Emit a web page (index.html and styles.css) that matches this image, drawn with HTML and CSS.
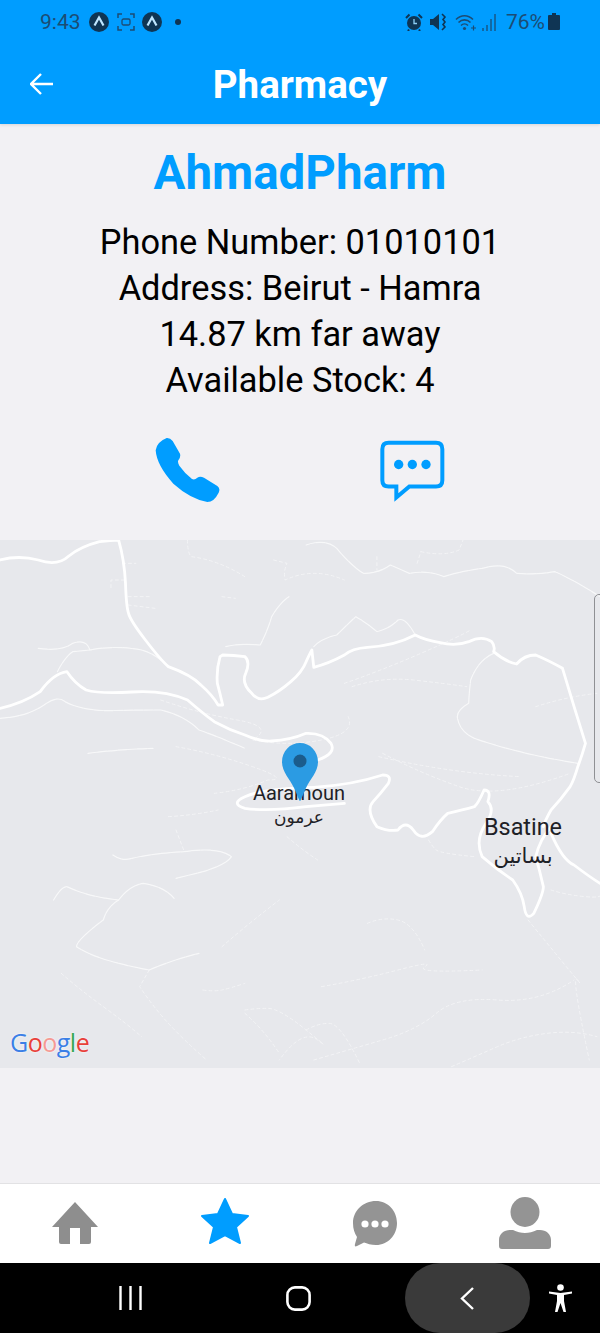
FILE: index.html
```html
<!DOCTYPE html>
<html lang="en">
<head>
<meta charset="utf-8">
<title>Pharmacy</title>
<link rel="stylesheet" href="styles.css">
</head>
<body>
<div class="app">
  <div class="topbar">
    <div class="status">
      <span class="time">9:43</span>
      <svg class="badge" viewBox="0 0 20 20"><circle cx="10" cy="10" r="10" fill="#0f3554"/><path d="M5.500 13.500 10 5.500l4.500 8" fill="none" stroke="#bfe6ff" stroke-width="2.200"/></svg>
      <svg class="focus" viewBox="0 0 18 18"><path d="M1 5V1h4M13 1h4v4M17 13v4h-4M5 17H1v-4" fill="none" stroke="#1c4c74" stroke-width="1.500"/><rect x="5" y="6" width="8" height="6" rx="1.500" fill="none" stroke="#1c4c74" stroke-width="1.300"/></svg>
      <svg class="badge" viewBox="0 0 20 20"><circle cx="10" cy="10" r="10" fill="#0f3554"/><path d="M5.500 13.500 10 5.500l4.500 8" fill="none" stroke="#bfe6ff" stroke-width="2.200"/></svg>
      <span class="dot"></span>
      <span class="grow"></span>
      <svg class="alarm" viewBox="0 0 18 18"><circle cx="9" cy="10" r="7" fill="#0f3554"/><path d="M1 5 4.500 1.500M17 5l-3.500-3.500M4 16.500 3 18M14 16.500l1 1.500" stroke="#0f3554" stroke-width="2" fill="none"/><path d="M9 6v4.500h3" stroke="#8fd0f5" stroke-width="1.300" fill="none"/></svg>
      <svg class="mute" viewBox="0 0 18 18"><path d="M0 6h3l6-5v16l-6-5H0z" fill="#0f3554"/><path d="M12 1l3 3-2 2.500 2 2.500-2 2.500 2 2.500-3 3" fill="none" stroke="#0f3554" stroke-width="1.600"/></svg>
      <svg class="wifi" viewBox="0 0 21 18"><path d="M1 6.500c5-5 12-5 17 0M3.500 9.500c3.500-3.500 8.500-3.500 12 0M6 12.500c2-2 5-2 7 0" fill="none" stroke="#1c4c74" stroke-width="1.600"/><circle cx="9.500" cy="15.500" r="1.600" fill="#1c4c74"/><path d="M16 15h5M18.500 12.500v5" stroke="#1c4c74" stroke-width="1.200"/></svg>
      <svg class="signal" viewBox="0 0 15 18"><path d="M1 18v-3M5 18v-6M9 18V6M13 18V1" stroke="#1c4c74" stroke-width="1.700" opacity=".75"/></svg>
      <span class="pct">76%</span>
      <svg class="battery" viewBox="0 0 12 17"><path d="M4 0h4v2h3a1 1 0 0 1 1 1v13a1 1 0 0 1-1 1H1a1 1 0 0 1-1-1V3a1 1 0 0 1 1-1h3z" fill="#0f3554"/></svg>
    </div>
    <div class="header">
      <svg class="back" viewBox="0 0 23 22"><path d="M11 1 1 11l10 10M1 11h22" fill="none" stroke="#fff" stroke-width="2.400"/></svg>
      <div class="header-title">Pharmacy</div>
      <span></span>
    </div>
  </div>

  <div class="details">
    <h1 class="name">AhmadPharm</h1>
    <div class="info">
      <div>Phone Number: 01010101</div>
      <div>Address: Beirut - Hamra</div>
      <div>14.87 km far away</div>
      <div>Available Stock: 4</div>
    </div>
    <div class="actions">
      <svg class="phone" viewBox="105 50 195 195"><path d="M140 53Q150 52 158 62L180 100Q183 110 175 120Q172 126 178 136Q195 160 216 176Q224 180 232 172Q240 167 252 172L292 197Q302 205 296 217Q282 245 262 245Q210 235 160 190Q110 135 107 90Q110 65 140 53Z" fill="#009dff"/></svg>
      <svg class="bubble" viewBox="780 58 195 188"><path d="M806 66H948Q967 66 967 85V178Q967 197 948 197H868L829 230V197H806Q787 197 787 178V85Q787 66 806 66Z" fill="none" stroke="#009dff" stroke-width="12"/><circle cx="836" cy="131" r="14" fill="#009dff"/><circle cx="877" cy="131" r="14" fill="#009dff"/><circle cx="918" cy="131" r="14" fill="#009dff"/></svg>
    </div>
  </div>

  <div class="map">
    <svg class="roads" viewBox="0 0 1568 1584" preserveAspectRatio="none">
      <g class="r-main">
        <path d="M0 60Q50 45 100 60Q150 80 180 48Q210 20 260 5Q290 0 310 0Q325 60 328 130Q330 200 336 220Q340 240 380 300Q420 360 440 380Q500 405 525 435Q555 465 570 495L582 495Q575 460 568 430Q565 390 575 350L582 345Q610 345 640 350Q655 365 642 400Q630 430 658 460Q675 485 700 472Q730 455 760 425Q790 395 800 365Q810 340 815 330L820 382Q860 370 900 345Q920 325 960 322Q1030 318 1085 285Q1110 300 1150 308Q1190 320 1225 305Q1260 285 1285 305Q1295 320 1290 335Q1320 365 1350 372Q1370 345 1400 345Q1440 365 1470 385Q1500 500 1530 610Q1520 650 1510 680Q1500 720 1490 740Q1465 780 1440 810Q1425 840 1420 860"/>
        <path d="M0 505Q60 490 105 455Q140 400 175 395Q195 430 225 450Q260 462 345 456Q430 450 490 480Q530 520 560 545Q600 570 640 585Q680 605 710 603Q760 600 800 580Q845 578 865 610Q880 640 830 660"/>
        <path d="M820 742Q920 735 1000 705Q1025 705 1015 730Q995 760 975 785Q955 810 985 860Q1015 875 1040 870Q1060 840 1080 870Q1100 905 1130 875Q1150 840 1170 820Q1210 810 1240 800Q1250 790 1265 750Q1285 750 1275 785Q1295 810 1270 850Q1240 900 1260 950Q1300 990 1340 1020Q1365 1060 1370 1100Q1375 1145 1395 1120Q1420 1060 1420 1040Q1410 990 1400 950Q1410 900 1440 860"/>
        <path d="M820 742Q690 745 640 770Q600 790 640 805Q700 815 800 800L900 790"/>
        <path d="M1440 880Q1470 960 1500 975Q1540 1010 1568 1030"/>
      </g>
      <g class="r-mid">
        <path d="M0 535Q70 530 115 495Q150 465 170 485Q210 510 280 512Q350 510 420 510Q480 525 520 570Q570 590 640 625"/>
        <path d="M100 325Q160 335 190 310Q225 295 235 330Q300 315 370 330Q400 340 420 360"/>
        <path d="M150 395Q170 350 190 335L235 330"/>
        <path d="M800 15Q850 -5 880 25Q920 80 950 100Q990 100 1020 75Q1050 90 1070 100Q1120 90 1160 110Q1200 95 1260 85Q1320 65 1350 100Q1400 105 1450 95Q1500 120 1568 170"/>
        <path d="M590 320Q620 310 680 315Q700 270 710 230Q730 190 755 170"/>
        <path d="M820 320Q840 295 880 285Q920 240 930 230Q960 250 985 275Q1020 265 1040 240Q1060 230 1085 285"/>
        <path d="M1290 340Q1250 360 1230 420Q1225 470 1225 490Q1195 510 1195 530Q1200 575 1240 595Q1350 640 1510 670"/>
        <path d="M230 640Q310 628 400 625"/>
        <path d="M295 945Q320 965 345 955Q400 940 480 935Q570 920 605 950Q590 975 530 995L460 1015"/>
        <path d="M140 1080Q160 1040 175 1040Q230 1070 310 1080Q340 1035 375 1030Q430 1040 455 1075"/>
        <path d="M310 1080Q280 1100 270 1140Q200 1200 200 1220Q250 1260 390 1290Q450 1260 520 1240"/>
      </g>
      <g class="r-thin">
        <path d="M320 70H355M325 120H290V150M335 170H390M335 195 405 205M1100 35Q1160 50 1200 30L1210 0M1090 70 1100 35M985 50V90"/>
        <path d="M715 60 750 70Q740 95 745 120Q820 80 900 120M580 170 615 175M490 0Q490 40 500 50Q570 60 640 110"/>
        <path d="M1560 460Q1480 470 1400 500M900 430Q1000 390 1100 340T1230 270M920 440Q1000 410 1080 420T1220 440"/>
        <path d="M420 480Q520 520 620 540T660 600Q750 620 840 600T910 530M460 620Q560 640 660 680T700 720Q640 750 560 760"/>
        <path d="M1000 640Q1100 700 1200 740T1490 700M990 650Q1180 700 1360 710"/>
        <path d="M440 830Q510 825 570 810M460 870 480 930M750 890Q790 930 830 960"/>
        <path d="M160 1300Q210 1350 270 1400T370 1490M390 1290 365 1340Q400 1400 440 1450T540 1560"/>
        <path d="M640 1410Q670 1405 700 1405T800 1470 830 1500 730 1560M640 1420Q690 1470 730 1540M800 1470Q830 1450 860 1450T940 1570"/>
        <path d="M1180 1580Q1240 1550 1300 1520T1430 1480 1560 1490M1380 1140Q1430 1210 1480 1280T1510 1320 1540 1560"/>
        <path d="M840 1340Q940 1320 1040 1290T1110 1280 1260 1290M820 1560Q910 1530 1000 1500T1140 1420 1300 1380 1500 1320"/>
        <path d="M960 1150Q1000 1130 1040 1140T1110 1230M530 1350Q560 1355 580 1350T640 1330M580 1220Q650 1150 730 1080"/>
        <path d="M1440 1050Q1480 1065 1530 1070T1568 1060M1120 900Q1130 920 1140 930T1240 950"/>
      </g>
    </svg>
    <span class="edge-tab"></span>
    <div class="label label-a"><div>Aaramoun</div><div class="ar" lang="ar" dir="rtl">عرمون</div></div>
    <div class="label label-b"><div>Bsatine</div><div class="ar" lang="ar" dir="rtl">بساتين</div></div>
    <svg class="pin" viewBox="0 0 36 58"><path d="M18 0C8 0 0 8 0 19c0 10 8 17 12 26 3 6 5 13 6 13s3-7 6-13c4-9 12-16 12-26C36 8 28 0 18 0Z" fill="#2b9be3"/><circle cx="18" cy="18" r="6.500" fill="#1b5c8c"/></svg>
    <div class="google"><span class="g-b">G</span><span class="g-r">o</span><span class="g-y">o</span><span class="g-b">g</span><span class="g-g">l</span><span class="g-r">e</span></div>
  </div>

  <div class="spacer"></div>

  <nav class="tabs">
    <div class="tab"><svg class="ic-home" viewBox="0 0 46 42"><path d="M23 0 46 25H39V40Q39 42 37 42H28V26H18V42H9Q7 42 7 40V25H0Z" fill="#8e8e8e"/></svg></div>
    <div class="tab"><svg class="ic-star" viewBox="0 0 50 48"><path d="M25 2 32 17 48 19 36 30 40 46 25 38 10 46 14 30 2 19 18 17Z" fill="#009dff" stroke="#009dff" stroke-width="2" stroke-linejoin="round"/></svg></div>
    <div class="tab"><svg class="ic-chat" viewBox="0 0 44 46"><path d="M23 0C35 0 44 10 44 22S35 44 23 44C18 44 14 42.500 11 41.500L4 45C2 46 1.500 45 2 43L4 36C1.500 32 0 28 0 22 0 10 10 0 23 0Z" fill="#949494"/><circle cx="12" cy="23" r="3.600" fill="#fff"/><circle cx="22" cy="23" r="3.600" fill="#fff"/><circle cx="32" cy="23" r="3.600" fill="#fff"/></svg></div>
    <div class="tab"><svg class="ic-user" viewBox="0 0 52 52"><ellipse cx="26" cy="15" rx="14.500" ry="15" fill="#949494"/><path d="M0 46V43C0 37 5 33 11 33H14C18 35 22 36 26 36S34 35 38 33H41C47 33 52 37 52 43V49Q52 52 49 52H3Q0 52 0 49Z" fill="#949494"/></svg></div>
  </nav>

  <div class="sysnav">
    <svg class="sys-menu" viewBox="0 0 23 24"><path d="M1.500 0V24M11.500 0V24M21.500 0V24" stroke="#fff" stroke-width="2.400"/></svg>
    <svg class="sys-home" viewBox="0 0 25 25"><rect x="1.400" y="1.400" width="22.200" height="22.200" rx="7.500" fill="none" stroke="#fff" stroke-width="2.600"/></svg>
    <div class="sys-pill"><svg class="sys-back" viewBox="0 0 14 23"><path d="M13 1 2 11.500 13 22" fill="none" stroke="#fff" stroke-width="2.400"/></svg></div>
    <svg class="sys-acc" viewBox="0 0 23 28"><circle cx="11.500" cy="3.500" r="3.300" fill="#fff"/><path d="M0 9.500 8 11V17L6 28H8.500L11.500 19 14.500 28H17L15 17V11L23 9.500V7.500L11.500 9 0 7.500Z" fill="#fff"/></svg>
  </div>
</div>
</body>
</html>
```
FILE: styles.css
```css
* { box-sizing: border-box; }
html, body { margin: 0; padding: 0; }
body { background: #f2f1f4; font-family: Roboto, "Liberation Sans", sans-serif; }

.app { width: 600px; height: 1333px; display: flex; flex-direction: column; overflow: hidden; }

.topbar { height: 124px; flex: none; background: #009dff; box-shadow: 0 1px 3px rgba(0,0,0,.12); }
.status { height: 42px; padding: 1px 40px 0 40px; display: flex; align-items: center; color: #1c4c74; font-size: 21px; }
.time { width: 49px; }
.badge { width: 20px; height: 20px; }
.focus { width: 18px; height: 18px; margin: 0 7px 0 8px; }
.dot { width: 6px; height: 6px; border-radius: 50%; background: #0f3554; margin-left: 13px; }
.grow { flex: 1; }
.alarm { width: 18px; height: 18px; }
.mute { width: 18px; height: 18px; margin-left: 7px; }
.wifi { width: 21px; height: 18px; margin-left: 7px; }
.signal { width: 15px; height: 18px; margin-left: 6px; }
.pct { margin-left: 9px; width: 38px; }
.battery { width: 12px; height: 17px; margin-left: 4px; }

.header { height: 82px; padding: 0 30px 0 30px; display: grid; grid-template-columns: 1fr auto 1fr; align-items: center; }
.back { width: 23px; height: 22px; margin-top: 1px; }
.header-title { color: #fff; font-size: 38.500px; font-weight: 700; line-height: 46px; margin-top: 3px; }

.details { height: 416px; flex: none; text-align: center; }
.name { margin: 0; padding-top: 21px; color: #009dff; font-size: 47.500px; line-height: 56px; font-weight: 700; }
.info { margin-top: 18px; color: #000; font-size: 34.400px; line-height: 46px; }
.actions { margin-top: 34px; padding: 0 155px; display: flex; justify-content: space-between; align-items: flex-start; }
.phone { width: 65px; height: 65px; }
.bubble { width: 65px; height: 63px; margin-top: 3px; }

.map { position: relative; height: 528px; flex: none; background: #e7e8ec; overflow: hidden; }
.roads { position: absolute; inset: 0; width: 100%; height: 100%; fill: none; stroke: #fff; stroke-linejoin: round; stroke-linecap: round; }
.roads path { vector-effect: non-scaling-stroke; }
.r-main { stroke-width: 2.800; }
.r-mid { stroke-width: 1.200; opacity: .7; stroke-dasharray: 9 1; }
.r-thin { stroke-width: 1; opacity: .5; stroke-dasharray: 3 3; }
.edge-tab { position: absolute; left: 594px; top: 54px; width: 12px; height: 189px; border: 1px solid #8f9094; border-radius: 5px; }
.label { position: absolute; text-align: center; color: #1e2126; }
.label-a { left: 240px; top: 241px; width: 118px; font-size: 20px; line-height: 24px; }
.label-b { left: 463px; top: 274px; width: 120px; font-size: 23.400px; line-height: 27px; }
.label-a .ar { font-family: "DejaVu Sans", sans-serif; font-size: 17px; line-height: 24px; }
.label-b .ar { font-family: "DejaVu Sans", sans-serif; font-size: 21px; line-height: 30px; }
.pin { position: absolute; left: 282px; top: 203px; width: 36px; height: 58px; }
.google { position: absolute; left: 10px; top: 486px; font-family: "Open Sans", sans-serif; font-weight: 500; font-size: 25px; line-height: 32px; letter-spacing: -.5px; text-shadow: 0 0 2px #fff; }
.g-b { color: #3b7fe6; }
.g-r { color: #e8403a; }
.g-y { color: #f59a94; }
.g-g { color: #35a853; }

.spacer { flex: 1; }

.tabs { height: 80px; flex: none; background: #fff; border-top: 1px solid #e2e2e4; display: grid; grid-template-columns: repeat(4, 1fr); }
.tab { display: flex; justify-content: center; }
.ic-home { width: 46px; height: 42px; margin-top: 18px; }
.ic-star { width: 50px; height: 48px; margin-top: 13px; }
.ic-chat { width: 44px; height: 46px; margin-top: 17px; }
.ic-user { width: 52px; height: 52px; margin-top: 13px; }

.sysnav { height: 70px; flex: none; background: #000; display: flex; align-items: center; padding-left: 119px; }
.sys-menu { width: 23px; height: 24px; }
.sys-home { width: 25px; height: 25px; margin-left: 144px; }
.sys-pill { width: 125px; height: 70px; margin-left: 94px; border-radius: 35px; background: #3a3a3a; display: flex; align-items: center; justify-content: center; }
.sys-back { width: 14px; height: 23px; margin-right: 2px; }
.sys-acc { width: 23px; height: 28px; margin-left: 19px; }
```
